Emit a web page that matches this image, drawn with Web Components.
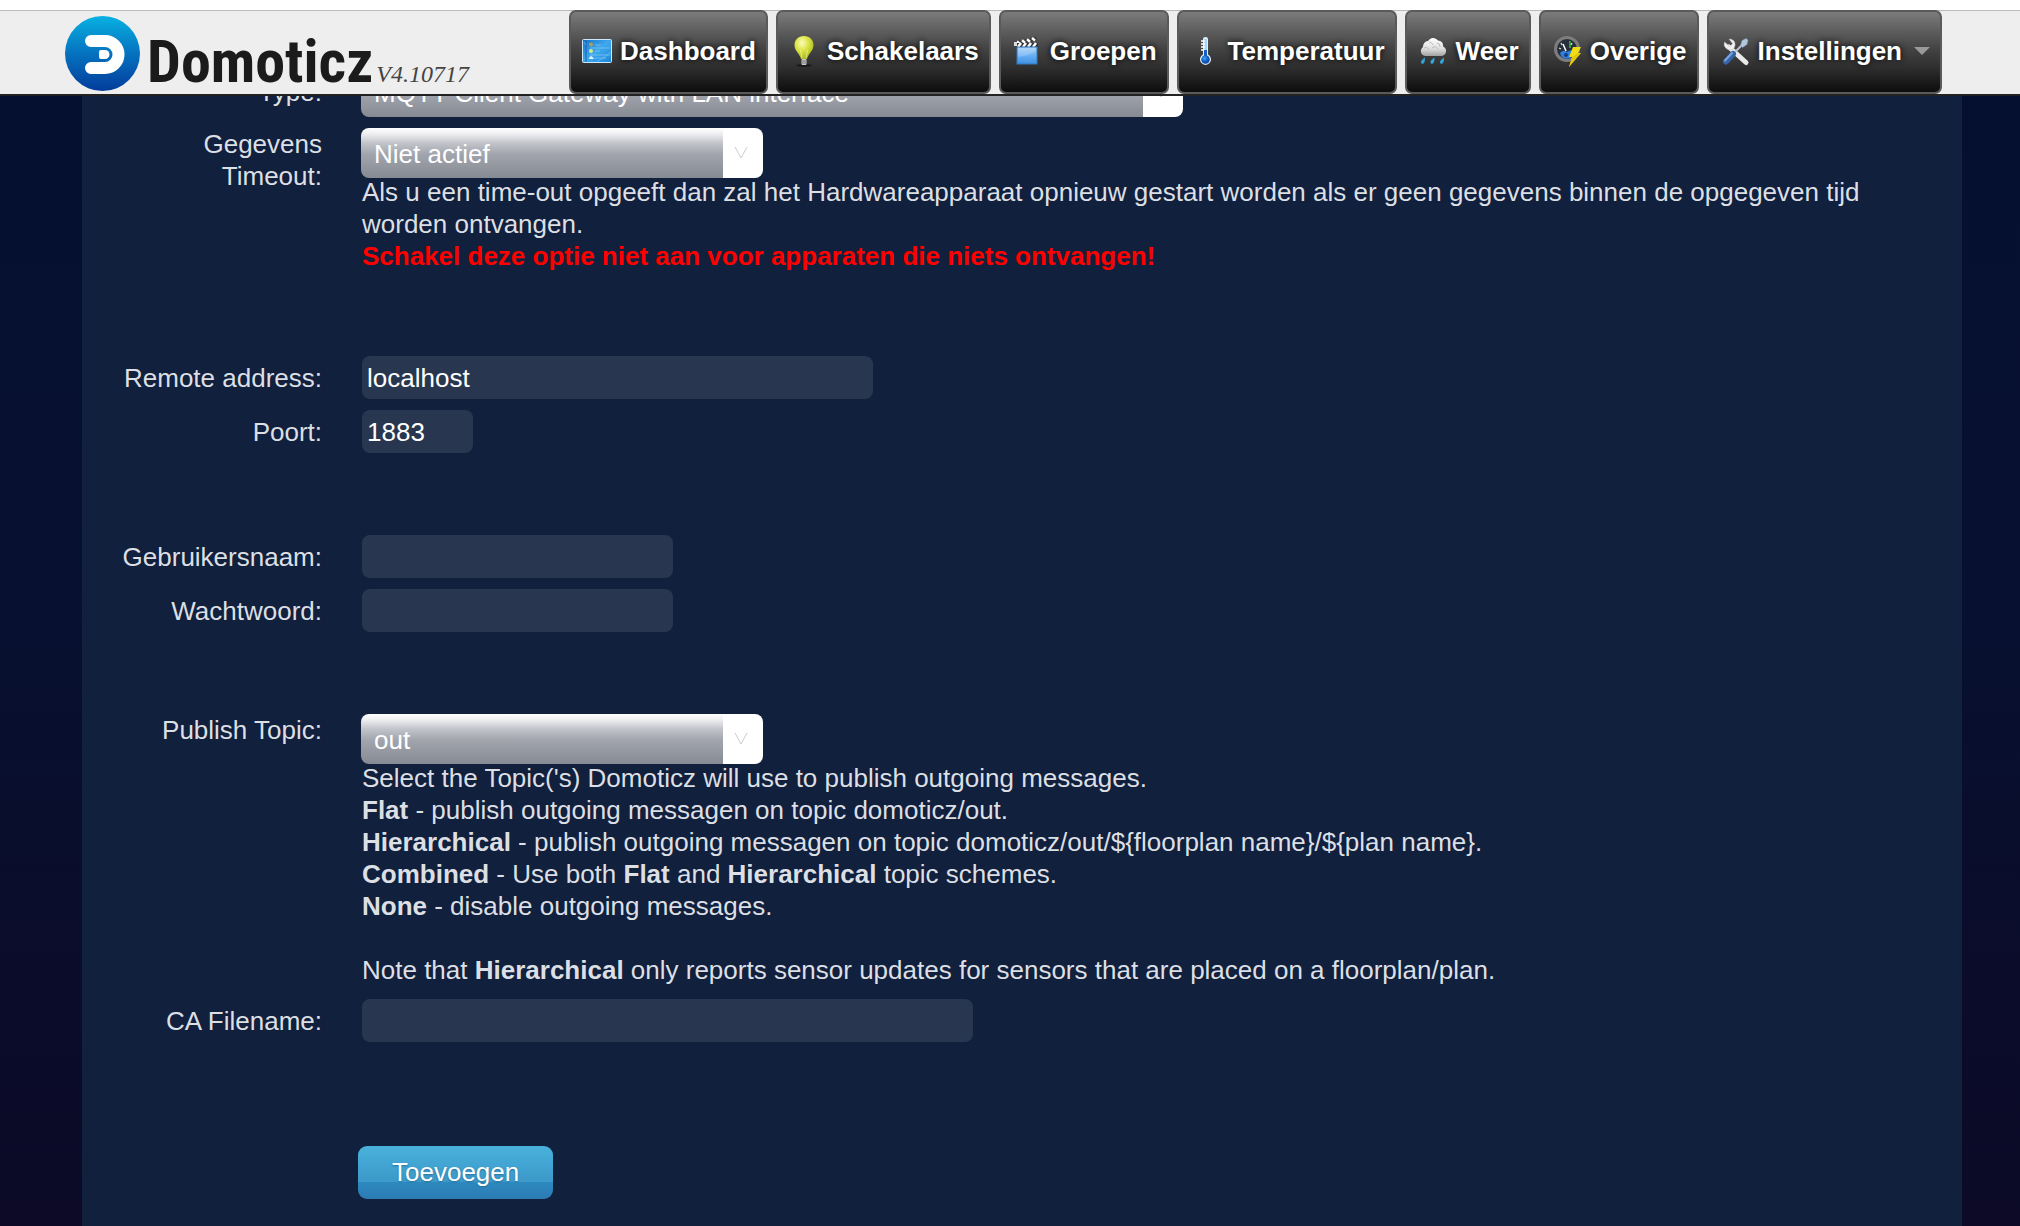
<!DOCTYPE html>
<html lang="nl">
<head>
<meta charset="utf-8">
<title>Domoticz</title>
<style>
	body {
		margin: 0;
		background: #050f2f;
		font: 26px/32px "Liberation Sans", Arial, sans-serif;
		color: #dcdfe4;
	}
</style>
</head>
<body>
<domo-app>
	<domo-header slot="header" version="V4.10717">
		<domo-nav-item icon="dashboard">Dashboard</domo-nav-item>
		<domo-nav-item icon="bulb">Schakelaars</domo-nav-item>
		<domo-nav-item icon="scene">Groepen</domo-nav-item>
		<domo-nav-item icon="temp">Temperatuur</domo-nav-item>
		<domo-nav-item icon="rain">Weer</domo-nav-item>
		<domo-nav-item icon="utility">Overige</domo-nav-item>
		<domo-nav-item icon="tools" menu>Instellingen</domo-nav-item>
	</domo-header>
	<domo-hardware-form>
		<domo-group>
			<domo-select label="Type:" value="MQTT Client Gateway with LAN interface" size="xlarge" middle></domo-select>
			<domo-select label="Gegevens Timeout:" value="Niet actief">
				Als u een time-out opgeeft dan zal het Hardwareapparaat opnieuw gestart worden als er geen gegevens binnen de opgegeven tijd worden ontvangen.<br>
				<b style="color: #f00">Schakel deze optie niet aan voor apparaten die niets ontvangen!</b>
			</domo-select>
		</domo-group>
		<domo-group>
			<domo-input label="Remote address:" value="localhost" size="large"></domo-input>
			<domo-input label="Poort:" value="1883" size="small"></domo-input>
		</domo-group>
		<domo-group>
			<domo-input label="Gebruikersnaam:"></domo-input>
			<domo-input label="Wachtwoord:" type="password"></domo-input>
		</domo-group>
		<domo-group>
			<domo-select label="Publish Topic:" value="out">
				Select the Topic('s) Domoticz will use to publish outgoing messages.<br>
				<b>Flat</b> - publish outgoing messagen on topic domoticz/out.<br>
				<b>Hierarchical</b> - publish outgoing messagen on topic domoticz/out/${floorplan name}/${plan name}.<br>
				<b>Combined</b> - Use both <b>Flat</b> and <b>Hierarchical</b> topic schemes.<br>
				<b>None</b> - disable outgoing messages.<br>
				<br>
				Note that <b>Hierarchical</b> only reports sensor updates for sensors that are placed on a floorplan/plan.
			</domo-select>
			<domo-input label="CA Filename:" size="xlarge"></domo-input>
		</domo-group>
		<domo-button slot="actions">Toevoegen</domo-button>
	</domo-hardware-form>
</domo-app>

<script>
(function() {
	const icons = {
		dashboard: `
			<defs><linearGradient id="g" x1="0" y1="0" x2="1" y2="1"><stop offset="0" stop-color="#1673c9"/><stop offset=".5" stop-color="#3fa9ee"/><stop offset="1" stop-color="#1b86d8"/></linearGradient></defs>
			<rect x="1.5" y="4.5" width="29" height="23" rx="1" fill="url(#g)" stroke="#cfe9fb"/>
			<path d="M5 5v22" stroke="#1565b0" stroke-width="1"/>
			<path d="M3 7l2 3M16 27L30 17" stroke="#7cc8f6" stroke-width="1" opacity=".6"/>
			<path d="M14 10h6M14 16h5M14 23h11M9 13h20M9 20h20" stroke="#8fd0f7" stroke-width="1" opacity=".6"/>
			<circle cx="10" cy="9.500" r="2" fill="#ab9f62"/><circle cx="10" cy="16" r="2" fill="#d6eb8a"/><path d="M8 24q0-2 2-3 2 1 3 3z" fill="#e6f3fb"/>`,
		bulb: `
			<defs><radialGradient id="g" cx=".4" cy=".3" r=".7"><stop offset="0" stop-color="#fbfcc0"/><stop offset=".45" stop-color="#dde64a"/><stop offset="1" stop-color="#a9b81c"/></radialGradient></defs>
			<ellipse cx="16" cy="30.500" rx="8" ry="1.500" fill="#111" opacity=".7"/>
			<path d="M16 1c6 0 9.500 4 9.500 9 0 6-5 8-6.500 14h-6C11.500 18 6.500 16 6.500 10c0-5 3.500-9 9.500-9z" fill="url(#g)"/>
			<path d="M14 23l-1.500-8M18 23l1.500-8" stroke="#f5f7b0" stroke-width="1" opacity=".7"/>
			<rect x="13.500" y="24" width="5" height="6" rx="1" fill="#c9c9c9"/><path d="M13.500 26h5M13.500 28h5" stroke="#777"/>`,
		scene: `
			<defs><linearGradient id="g" x1="0" y1="0" x2="0" y2="1"><stop offset="0" stop-color="#a4cff8"/><stop offset=".55" stop-color="#63acf2"/><stop offset="1" stop-color="#3f8fe2"/></linearGradient></defs>
			<path d="M3.500 7L25 2l1 3L4.500 10z" fill="#333"/>
			<path d="M6 6.500l3 2.500M11 5.300l3 2.500M16 4.200l3 2.500M21 3l3 2.500" stroke="#fff" stroke-width="2.500"/>
			<rect x="5" y="8" width="22" height="4" fill="#333"/>
			<path d="M10 8l-3 4M15 8l-3 4M20 8l-3 4M25 8l-3 4" stroke="#fff" stroke-width="2.500"/>
			<rect x="3" y="7" width="3" height="4" fill="#ddd"/>
			<rect x="6" y="12" width="20" height="17" fill="url(#g)" stroke="#3478bd" stroke-width="1"/>
			<path d="M7 22q10-1 18-6v-3H7z" fill="#fff" opacity=".18"/>`,
		temp: `
			<defs><radialGradient id="g" cx=".4" cy=".35" r=".7"><stop offset="0" stop-color="#4da3f5"/><stop offset=".5" stop-color="#1163c8"/><stop offset="1" stop-color="#0a3f96"/></radialGradient></defs>
			<path d="M14 4q0-2 2.500-2T19 4v15.500a5.500 5.500 0 1 1-5 0z" fill="#e4eff9"/>
			<path d="M15 4h3v12h-3z" fill="#a6d5f5"/>
			<path d="M12 6h4M12 9h4M12 12h4M12 15h4" stroke="#fff" stroke-width="1.500"/>
			<path d="M15 15h3v7h-3z" fill="#1560c4"/>
			<circle cx="16.500" cy="24.500" r="4.300" fill="url(#g)"/>`,
		rain: `
			<defs><linearGradient id="g" x1="0" y1="0" x2="0" y2="1"><stop offset="0" stop-color="#fff"/><stop offset=".6" stop-color="#dedede"/><stop offset="1" stop-color="#a2a2a2"/></linearGradient></defs>
			<path d="M8 21a5 5 0 0 1-2-9 5.500 5.500 0 0 1 5-6 6 6 0 0 1 10-.5 5 5 0 0 1 5 6A5 5 0 0 1 25 21z" fill="url(#g)"/>
			<path d="M7 13q3-2 5 1M12 7q3 0 4 3M20 8q3 0 3 4M15 13q3-3 6 1" fill="none" stroke="#bdbdbd"/>
			<path d="M8 22.500q-4.500 3-4 5 .5 2 2.500 1Q8 27.500 8 22.500zM17.500 22.500q-4.500 3-4 5 .5 2 2.500 1 1.500-1 1.500-6zM27 22.500q-4.500 3-4 5 .5 2 2.500 1 1.500-1 1.500-6z" fill="#2fa6dd"/>`,
		utility: `
			<circle cx="16" cy="14" r="11.500" fill="#272f3d" stroke="#7d7d7d" stroke-width="3"/>
			<path d="M9 18q3-4 7-1 4-3 7-1 0 5-4 7-6 2-9-2z" fill="#2d7fe0"/>
			<path d="M8 13l2 1M10 8l1 2M21 8l-1 2" stroke="#ddd" stroke-width="1.300"/>
			<path d="M12 9l3 7" stroke="#fff" stroke-width="1.500"/>
			<path d="M19 6v7" stroke="#46b847" stroke-width="1.500"/>
			<circle cx="15" cy="20" r="2" fill="#163e78"/>
			<path d="M22 12h8l-3 6h3L18 32l3-10h-3z" fill="#f2de14"/>
			<path d="M27 18h3L18 32l3-10z" fill="#d9b90b" opacity=".6"/>`,
		tools: `
			<path d="M10 12L27 27.500" stroke="#e9e9e9" stroke-width="5" stroke-linecap="round"/>
			<path d="M5.500 7a6 6 0 0 0 8 7.500 6 6 0 0 0 1.500-8.500 6 6 0 0 0-5-2l3.500 4.500-2.500 3z" fill="#efefef" stroke="#bcbcbc" stroke-width=".5"/>
			<path d="M23 10L15 18" stroke="#b9c4d2" stroke-width="2"/>
			<path d="M27 3.500l2 1.500-1 4.500-4.500 3-2-2 1.500-5z" fill="#b4c6dc" stroke="#8199b5" stroke-width=".5"/>
			<path d="M14 19L7 26.500" stroke="#3565a8" stroke-width="6" stroke-linecap="round"/>
			<path d="M13 18L6 25.500" stroke="#7aa5df" stroke-width="2" stroke-linecap="round"/>`
	};

	function attach(el, html) {
		const template = document.createElement("template");
		template.innerHTML = html;
		const root = el.attachShadow({mode: "open"});
		root.appendChild(template.content.cloneNode(true));
		return root;
	}

	class DomoApp extends HTMLElement {
		constructor() {
			super();
			attach(this, `
				<style>
				:host {
					display: flex;
					flex-direction: column;
					min-height: 100vh;
					background: linear-gradient(#050f2f, #071030 50%, #0a0d2b 75%, #0c0a27);
				}
				/* the page is scrolled a little way under the sticky header */
				main {
					flex: 1;
					margin: -29px 58px 0 82px;
					background: #11203c;
				}
				</style>
				<slot name="header"></slot>
				<main><slot></slot></main>
			`);
		}
	}

	class DomoHeader extends HTMLElement {
		constructor() {
			super();
			const root = attach(this, `
				<style>
				:host {
					display: block;
					position: sticky;
					top: 0;
					z-index: 1;
				}
				header {
					display: flex;
					justify-content: space-between;
					padding: 10px 78px 0 65px;
					background: linear-gradient(#fff 10px, #bbb 10px, #bbb 11px, #eee 11px);
					border-bottom: 2px solid #222;
				}
				.brand {
					display: flex;
					align-items: flex-end;
					gap: 7px;
					color: #1b1b1b;
					text-decoration: none;
				}
				.brand svg {
					display: block;
					margin-bottom: 3px;
				}
				.words {
					display: flex;
					align-items: baseline;
					gap: 3px;
				}
				.name {
					font: bold 60px/64px "Roboto Condensed", "Liberation Sans Narrow", "Liberation Sans", sans-serif;
				}
				.version {
					font: italic 24px/32px "Liberation Serif", serif;
					color: #444;
				}
				nav {
					display: flex;
					gap: 8px;
				}
				</style>
				<header>
					<a class="brand" href="#">
						<svg width="75" height="75" viewBox="0 0 75 75" aria-hidden="true">
							<defs><linearGradient id="g" x1="0" y1="0" x2="0" y2="1"><stop offset="0" stop-color="#08b1e2"/><stop offset=".5" stop-color="#0572bf"/><stop offset="1" stop-color="#033c9b"/></linearGradient></defs>
							<circle cx="37.500" cy="37.500" r="37.500" fill="url(#g)"/>
							<path d="M26 25H40a13.500 13.500 0 0 1 0 27H26" fill="none" stroke="#fff" stroke-width="12" stroke-linecap="round"/>
							<path d="M36 34h4a4.500 4.500 0 0 1 0 9h-4q-2 0-2-2v-5q0-2 2-2z" fill="#fff"/>
						</svg>
						<span class="words"><span class="name">Domoticz</span><span class="version"></span></span>
					</a>
					<nav><slot></slot></nav>
				</header>
			`);
			root.querySelector(".version").textContent = this.getAttribute("version");
		}
	}

	class DomoNavItem extends HTMLElement {
		constructor() {
			super();
			attach(this, `
				<style>
				:host {
					display: block;
				}
				a {
					display: flex;
					align-items: center;
					gap: 7px;
					box-sizing: border-box;
					height: 84px;
					padding: 0 10px 2px;
					border: 2px solid #5a5a5a;
					border-radius: 7px;
					background: linear-gradient(#7b7b7b, #444 45%, #2e2e2e 70%, #0d0d0d);
					color: #fff;
					font-weight: bold;
					text-decoration: none;
					text-shadow: 0 0 6px #000;
					white-space: nowrap;
				}
				svg {
					display: block;
				}
				.caret {
					margin-left: 5px;
					border: 8px solid transparent;
					border-top-color: #999;
					border-bottom: 0;
				}
				</style>
				<a href="#">
					<svg width="32" height="32" viewBox="0 0 32 32" aria-hidden="true">${icons[this.getAttribute("icon")]}</svg>
					<span><slot></slot></span>
					${this.hasAttribute("menu") ? `<span class="caret"></span>` : ""}
				</a>
			`);
		}
	}

	class DomoHardwareForm extends HTMLElement {
		constructor() {
			super();
			attach(this, `
				<style>
				:host {
					display: block;
				}
				form {
					display: flex;
					flex-direction: column;
					gap: 82px;
					padding: 0 39px 24px;
				}
				.actions {
					margin: 22px 0 0 237px;
				}
				</style>
				<form>
					<slot></slot>
					<div class="actions"><slot name="actions"></slot></div>
				</form>
			`);
		}
	}

	class DomoGroup extends HTMLElement {
		constructor() {
			super();
			attach(this, `
				<style>
				:host {
					display: flex;
					flex-direction: column;
					gap: 11px;
				}
				</style>
				<slot></slot>
			`);
		}
	}

	const rowStyle = `
		:host {
			display: grid;
			grid-template-columns: 201px 1fr;
			column-gap: 40px;
		}
		:host([middle]) {
			align-items: center;
		}
		label {
			text-align: right;
		}
	`;

	class DomoInput extends HTMLElement {
		constructor() {
			super();
			const root = attach(this, `
				<style>
				${rowStyle}
				:host {
					align-items: center;
				}
				input {
					display: block;
					box-sizing: border-box;
					width: 311px;
					height: 43px;
					max-width: 100%;
					padding: 2px 5px 0;
					border: 0;
					border-radius: 8px;
					background: #28374f;
					color: #fff;
					font: inherit;
				}
				:host([size="small"]) input { width: 111px; }
				:host([size="large"]) input { width: 511px; }
				:host([size="xlarge"]) input { width: 611px; }
				</style>
				<label for="field"></label>
				<input id="field">
			`);
			const input = root.querySelector("input");
			root.querySelector("label").textContent = this.getAttribute("label");
			input.type = this.getAttribute("type") || "text";
			input.value = this.getAttribute("value") || "";
		}
	}

	class DomoSelect extends HTMLElement {
		constructor() {
			super();
			const root = attach(this, `
				<style>
				${rowStyle}
				.box {
					display: grid;
					grid-template-columns: 1fr 40px;
					width: 402px;
					max-width: 100%;
					margin-left: -1px;
				}
				:host([size="xlarge"]) .box { width: 822px; }
				select {
					grid-area: 1 / 1 / 2 / 3;
					appearance: none;
					box-sizing: border-box;
					width: 100%;
					height: 50px;
					padding: 2px 54px 0 13px;
					border: 0;
					border-radius: 8px;
					background:
						linear-gradient(#fff, #fff) right / 40px 100% no-repeat,
						linear-gradient(#fff, #eeeef1 12%, #c2c4ca 30%, #a2a5ad 52%, #868a92);
					color: #fff;
					font: inherit;
				}
				svg {
					grid-area: 1 / 2;
					align-self: center;
					margin-left: 11px;
					pointer-events: none;
				}
				.help {
					margin-top: -2px;
					padding-bottom: 2px;
				}
				</style>
				<label for="field"></label>
				<div>
					<div class="box">
						<select id="field"><option></option></select>
						<svg width="14" height="14" viewBox="0 0 14 14" aria-hidden="true"><path d="M1 1l6 11 6-11" fill="none" stroke="#ccc"/></svg>
					</div>
					${this.childNodes.length ? `<div class="help"><slot></slot></div>` : ""}
				</div>
			`);
			root.querySelector("label").textContent = this.getAttribute("label");
			root.querySelector("option").textContent = this.getAttribute("value");
		}
	}

	class DomoButton extends HTMLElement {
		constructor() {
			super();
			attach(this, `
				<style>
				:host {
					display: inline-flex;
				}
				button {
					height: 53px;
					padding: 0 34px 2px;
					border: 0;
					border-radius: 9px;
					background: linear-gradient(#49b1dc, #3c99c9 67%, #2c89bf 69%, #2c7bb3);
					color: #fff;
					font: inherit;
					text-shadow: 0 1px 2px #2a6f95;
				}
				</style>
				<button type="button"><slot></slot></button>
			`);
		}
	}

	customElements.define("domo-app", DomoApp);
	customElements.define("domo-header", DomoHeader);
	customElements.define("domo-nav-item", DomoNavItem);
	customElements.define("domo-hardware-form", DomoHardwareForm);
	customElements.define("domo-group", DomoGroup);
	customElements.define("domo-input", DomoInput);
	customElements.define("domo-select", DomoSelect);
	customElements.define("domo-button", DomoButton);
})();
</script>
</body>
</html>
